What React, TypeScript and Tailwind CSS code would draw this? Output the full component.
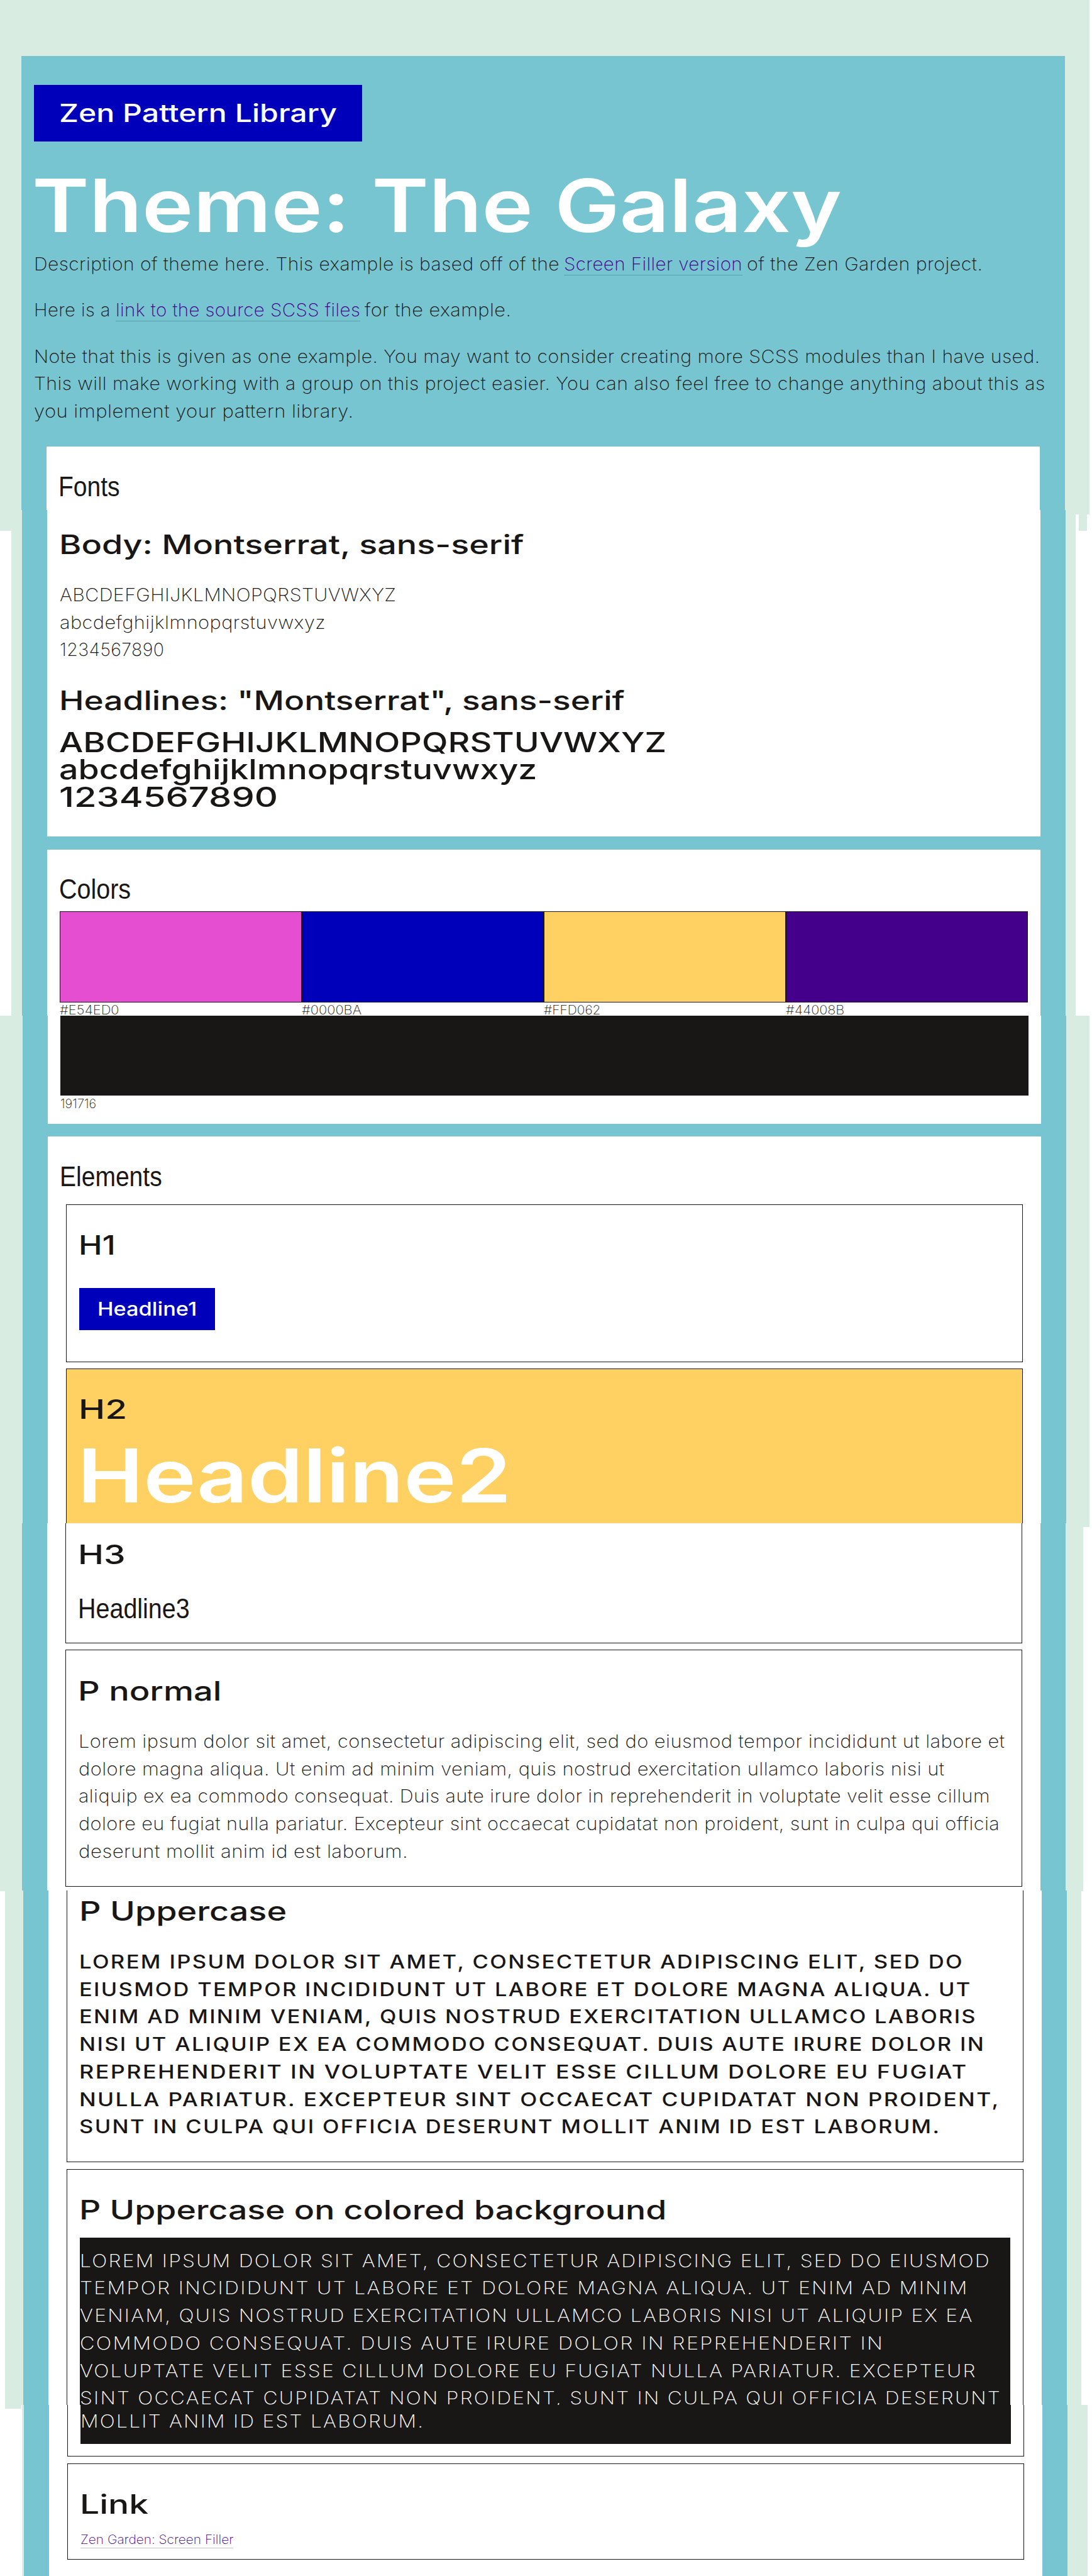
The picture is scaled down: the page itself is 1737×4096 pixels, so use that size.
import React, { useLayoutEffect, useRef, useState } from "react";

type FitProps = {
  w: number;
  className?: string;
  children: React.ReactNode;
};

/* One line of text whose glyphs are widened to fill exactly `w` pixels. */
function Fit({ w, className = "", children }: FitProps) {
  const ref = useRef<HTMLSpanElement>(null);
  const [style, setStyle] = useState<React.CSSProperties>({});
  useLayoutEffect(() => {
    const el = ref.current;
    if (!el) return;
    setStyle({ transform: `scaleX(${w / el.offsetWidth})` });
  }, [w]);
  return (
    <span className={`block whitespace-pre ${className}`}>
      <span ref={ref} style={style} className="inline-block origin-left">
        {children}
      </span>
    </span>
  );
}

/* A fitted line that also takes up exactly `w` pixels in a row of segments. */
function Segment({ w, children }: FitProps) {
  return (
    <span className="flex" style={{ width: w }}>
      <Body w={w}>{children}</Body>
    </span>
  );
}

const display = "font-['Inter',sans-serif] font-medium";

function Title({ w, className = "", children }: FitProps) {
  return (
    <h4 className={className}>
      <Fit w={w + 1} className={`${display} -ml-[1.5px] h-[44px] text-[42px] leading-[44px]`}>
        {children}
      </Fit>
    </h4>
  );
}

function Narrow({ w, className = "", children }: FitProps) {
  return (
    <h3 className={className}>
      <Fit
        w={w}
        className="-ml-[1px] h-[44px] font-['Liberation_Sans_Narrow','Liberation_Sans',sans-serif] text-[45px] leading-[44px]"
      >
        {children}
      </Fit>
    </h3>
  );
}

function Body({ w, className = "h-[43.8px] leading-[43.8px]", children }: FitProps) {
  return (
    <Fit w={w} className={`font-['Inter',sans-serif] text-[28.5px] font-[150] tracking-[0.4px] ${className}`}>
      {children}
    </Fit>
  );
}

function Label({ w, className = "", children }: FitProps) {
  return (
    <Fit w={w} className={`h-[25px] font-['Inter',sans-serif] text-[20px] leading-[25px] font-[150] ${className}`}>
      {children}
    </Fit>
  );
}

const swatches = [
  { name: "#E54ED0", w: 94, cls: "bg-[#e54ed0]" },
  { name: "#0000BA", w: 95, cls: "bg-[#0000ba]" },
  { name: "#FFD062", w: 91, cls: "bg-[#ffd062]" },
  { name: "#44008B", w: 93, cls: "bg-[#44008b]" },
];

const normalLines: [string, number][] = [
  ["Lorem ipsum dolor sit amet, consectetur adipiscing elit, sed do eiusmod tempor incididunt ut labore et", 1473],
  ["dolore magna aliqua. Ut enim ad minim veniam, quis nostrud exercitation ullamco laboris nisi ut", 1378],
  ["aliquip ex ea commodo consequat. Duis aute irure dolor in reprehenderit in voluptate velit esse cillum", 1450],
  ["dolore eu fugiat nulla pariatur. Excepteur sint occaecat cupidatat non proident, sunt in culpa qui officia", 1465],
  ["deserunt mollit anim id est laborum.", 524],
];

const upperLines: [string, number][] = [
  ["LOREM IPSUM DOLOR SIT AMET, CONSECTETUR ADIPISCING ELIT, SED DO", 1406],
  ["EIUSMOD TEMPOR INCIDIDUNT UT LABORE ET DOLORE MAGNA ALIQUA. UT", 1419],
  ["ENIM AD MINIM VENIAM, QUIS NOSTRUD EXERCITATION ULLAMCO LABORIS", 1427],
  ["NISI UT ALIQUIP EX EA COMMODO CONSEQUAT. DUIS AUTE IRURE DOLOR IN", 1440],
  ["REPREHENDERIT IN VOLUPTATE VELIT ESSE CILLUM DOLORE EU FUGIAT", 1412],
  ["NULLA PARIATUR. EXCEPTEUR SINT OCCAECAT CUPIDATAT NON PROIDENT,", 1464],
  ["SUNT IN CULPA QUI OFFICIA DESERUNT MOLLIT ANIM ID EST LABORUM.", 1369],
];

const darkLines: [string, number][] = [
  ["LOREM IPSUM DOLOR SIT AMET, CONSECTETUR ADIPISCING ELIT, SED DO EIUSMOD", 1449],
  ["TEMPOR INCIDIDUNT UT LABORE ET DOLORE MAGNA ALIQUA. UT ENIM AD MINIM", 1414],
  ["VENIAM, QUIS NOSTRUD EXERCITATION ULLAMCO LABORIS NISI UT ALIQUIP EX EA", 1422],
  ["COMMODO CONSEQUAT. DUIS AUTE IRURE DOLOR IN REPREHENDERIT IN", 1279],
  ["VOLUPTATE VELIT ESSE CILLUM DOLORE EU FUGIAT NULLA PARIATUR. EXCEPTEUR", 1427],
  ["SINT OCCAECAT CUPIDATAT NON PROIDENT, SUNT IN CULPA QUI OFFICIA DESERUNT", 1466],
];

function LeftEdge() {
  return (
    <div className="flex w-[34px] shrink-0 flex-col">
      <div className="h-[844px]" />
      <div className="mr-4 h-[771px] bg-white" />
      <div className="h-[1392px]" />
      <div className="h-[823px] w-[8px] bg-white" />
      <div className="flex-1 bg-white" />
    </div>
  );
}

function RightEdge() {
  return (
    <div className="flex w-[39px] shrink-0 flex-col items-end">
      <div className="h-[818px] w-[4px] bg-white" />
      <div className="flex h-[26px] w-[26px] justify-between">
        <div className="w-[5px] bg-white" />
        <div className="w-[8px] bg-white" />
      </div>
      <div className="h-[771px] w-[26px] bg-white" />
      <div className="h-[813px] w-[4px] bg-white" />
      <div className="h-[579px] w-[14px] bg-white" />
      <div className="h-[817px] w-[17px] bg-white" />
      <div className="w-[7px] flex-1 bg-white" />
    </div>
  );
}

export default function App() {
  return (
    <div className="flex h-[4096px] w-[1737px] overflow-hidden bg-[#d9ece1] text-[#191716]">
      <LeftEdge />
      <main className="w-[1664px] shrink-0">
        {/* Introduction and the start of the fonts panel */}
        <section className="h-[811px] pt-[89.4px]">
          <div className="h-[721.6px] w-[1660px] bg-[#78c5d2] pt-[46px]">
            <div className="pl-[20px]">
              <h1 className="h-[89.6px] w-[521.5px] bg-[#0000ba] pt-[1px] pl-[40px] text-white">
                <Fit w={442} className={`${display} text-[39.5px] leading-[89.6px]`}>
                  Zen Pattern Library
                </Fit>
              </h1>
              <h2 className="mt-[42.4px] h-[120px] text-white">
                <Fit w={1288} className="-ml-[3px] font-['Inter',sans-serif] text-[117px] leading-[120px] font-semibold">
                  Theme: The Galaxy
                </Fit>
              </h2>
              <p className="mt-[11px] flex h-[43.8px]">
                <Segment w={836}>Description of theme here. This example is based off of the</Segment>
                <a className="ml-[7px] h-[40px] border-b border-[#5b9eae] text-[#44008b]">
                  <Segment w={284}>Screen Filler version</Segment>
                </a>
                <span className="ml-[7px]">
                  <Segment w={375}>of the Zen Garden project.</Segment>
                </span>
              </p>
              <p className="mt-[29.3px] flex h-[43.8px]">
                <Segment w={122}>Here is a</Segment>
                <a className="ml-[7.5px] h-[40px] border-b border-[#5b9eae] text-[#44008b]">
                  <Segment w={389}>link to the source SCSS files</Segment>
                </a>
                <span className="ml-[7px]">
                  <Segment w={233}>for the example.</Segment>
                </span>
              </p>
              <div className="mt-[29.4px]">
                <Body w={1601}>Note that this is given as one example. You may want to consider creating more SCSS modules than I have used.</Body>
                <Body w={1609}>This will make working with a group on this project easier. You can also feel free to change anything about this as</Body>
                <Body w={509}>you implement your pattern library.</Body>
              </div>
            </div>
            <div className="mx-[40px] mt-[34.3px] h-[100.6px] bg-white pt-[41.7px] pl-5">
              <Narrow w={98}>Fonts</Narrow>
            </div>
          </div>
        </section>

        {/* Font samples and swatches */}
        <section className="ml-[1px] flex h-[804px] w-[1660px] flex-col bg-[#78c5d2] px-[40px]">
          <div className="h-[519.4px] bg-white pt-[33.4px] pl-5">
            <Title w={738}>Body: Montserrat, sans-serif</Title>
            <div className="mt-[35.9px]">
              <Body w={535} className="h-[43.5px] leading-[43.5px]">ABCDEFGHIJKLMNOPQRSTUVWXYZ</Body>
              <Body w={423} className="h-[43.5px] leading-[43.5px]">abcdefghijklmnopqrstuvwxyz</Body>
              <Body w={166} className="h-[43.5px] leading-[43.5px]">1234567890</Body>
            </div>
            <Title className="mt-[37.7px]" w={899}>Headlines: "Montserrat", sans-serif</Title>
            <div className={`mt-[22.2px] -ml-[1.5px] text-[43.5px] leading-[43.5px] ${display}`}>
              <Fit w={966}>ABCDEFGHIJKLMNOPQRSTUVWXYZ</Fit>
              <Fit w={761}>abcdefghijklmnopqrstuvwxyz</Fit>
              <Fit w={348}>1234567890</Fit>
            </div>
          </div>
          <div className="mt-[20.6px] flex-1 bg-white px-5 pt-[41.1px]">
            <Narrow w={114}>Colors</Narrow>
            <div className="mt-[12.5px] grid grid-cols-4">
              {swatches.map((s) => (
                <div key={s.name}>
                  <div className={`h-[145.6px] border border-[#191716] ${s.cls}`} />
                  <div className="h-[20.6px] overflow-hidden">
                    <Label w={s.w}>{s.name}</Label>
                  </div>
                </div>
              ))}
            </div>
          </div>
        </section>

        {/* Dark swatch, headline samples */}
        <section className="ml-[2px] flex h-[807px] w-[1660px] flex-col bg-[#78c5d2] px-[40px]">
          <div className="h-[172.4px] bg-white px-5">
            <div className="h-[127.2px] bg-[#191716]" />
            <Label w={57} className="pt-[1px]">191716</Label>
          </div>
          <div className="mt-[19.2px] flex flex-1 flex-col bg-white pt-[42.6px]">
            <Narrow className="pl-5" w={163}>Elements</Narrow>
            <div className="mx-[29px] mt-[21.9px] h-[250.6px] border border-[#191716] pt-[41.9px] pl-5">
              <Title w={58}>H1</Title>
              <div className="mt-[46.3px] h-[66.9px] w-[216px] bg-[#0000ba] pl-[29px] text-white">
                <Fit w={158} className={`${display} text-[29.8px] leading-[67px]`}>Headline1</Fit>
              </div>
            </div>
            <div className="mx-[29px] mt-[9.9px] flex-1 border border-b-0 border-[#191716] bg-[#ffd062] pt-[42.6px] pl-5">
              <Title w={76}>H2</Title>
              <Fit w={691} className="mt-[22.9px] -ml-[3px] font-['Inter',sans-serif] text-[118px] leading-[120px] font-semibold text-white">
                Headline2
              </Fit>
            </div>
          </div>
        </section>

        {/* Third headline and normal paragraph */}
        <section className="ml-[1px] h-[584px] w-[1660px] bg-[#78c5d2] px-[40px]">
          <div className="h-full bg-white px-[29px]">
            <div className="h-[191.2px] border border-t-0 border-[#191716] pt-[27.5px] pl-5">
              <Title w={75}>H3</Title>
              <Narrow className="mt-[42.6px]" w={178}>Headline3</Narrow>
            </div>
            <div className="mt-[9.9px] h-[377.3px] border border-[#191716] pt-[42.6px] pl-5">
              <Title w={227}>P normal</Title>
              <div className="mt-[36.2px]">
                {normalLines.map(([t, w]) => (
                  <Body key={t} w={w}>{t}</Body>
                ))}
              </div>
            </div>
          </div>
        </section>

        {/* Uppercase paragraphs */}
        <section className="ml-[3px] h-[818px] w-[1660px] overflow-hidden bg-[#78c5d2] px-[40px]">
          <div className="flex h-full flex-col bg-white px-[29px]">
            <div className="h-[432.2px] border border-t-0 border-[#191716] pt-[11.3px] pl-5">
              <Title w={329}>P Uppercase</Title>
              <div className={`mt-[36.7px] -ml-[1px] text-[29.3px] leading-[43.7px] tracking-[2px] ${display}`}>
                {upperLines.map(([t, w]) => (
                  <Fit key={t} w={w + 1}>{t}</Fit>
                ))}
              </div>
            </div>
            <div className="mt-[10.8px] flex min-h-0 flex-1 flex-col border border-b-0 border-[#191716] px-5 pt-[41.8px]">
              <Title w={933}>P Uppercase on colored background</Title>
              <div className="mt-[21.9px] min-h-0 flex-1 overflow-hidden bg-[#191716] pt-[15.1px] tracking-[2px] text-white">
                {darkLines.map(([t, w]) => (
                  <Fit key={t} w={w} className="h-[43.7px] font-['Inter',sans-serif] text-[28.5px] leading-[43.7px] font-[180]">
                    {t}
                  </Fit>
                ))}
              </div>
            </div>
          </div>
        </section>

        {/* End of the dark paragraph and link sample */}
        <section className="h-[272px] border-l border-white pl-[3px]">
          <div className="h-full w-[1660px] bg-[#78c5d2] px-[40px]">
            <div className="h-full bg-white px-[29px]">
              <div className="h-[81.7px] border border-t-0 border-[#191716] px-5">
                <div className="h-[62.4px] bg-[#191716] pt-[3.7px] text-white">
                  <Fit w={547} className="font-['Inter',sans-serif] text-[28.5px] leading-[43.8px] font-[180] tracking-[2px]">
                    MOLLIT ANIM ID EST LABORUM.
                  </Fit>
                </div>
              </div>
              <div className="mt-[11px] h-[152.9px] border border-[#191716] pt-[42.1px] pl-5">
                <Title w={108}>Link</Title>
                <a className="mt-[21.8px] block w-[243px] border-b border-[#c4c4c8] text-[#44008b]">
                  <Label w={243}>Zen Garden: Screen Filler</Label>
                </a>
              </div>
            </div>
          </div>
        </section>
      </main>
      <RightEdge />
    </div>
  );
}
